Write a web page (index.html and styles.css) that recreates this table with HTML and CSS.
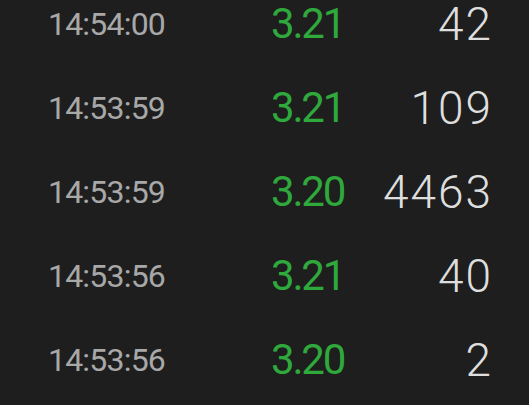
FILE: index.html
```html
<!DOCTYPE html>
<html lang="en">
<head>
  <meta charset="UTF-8">
  <meta name="viewport" content="width=device-width, initial-scale=1.0">
  <title>Trades</title>
  <link rel="stylesheet" href="styles.css">
</head>
<body>
  <div class="trade-list">
    <div class="trade-row">
      <span class="trade-time">14:54:00</span>
      <span class="trade-price">3.21</span>
      <span class="trade-volume">42</span>
    </div>
    <div class="trade-row">
      <span class="trade-time">14:53:59</span>
      <span class="trade-price">3.21</span>
      <span class="trade-volume">109</span>
    </div>
    <div class="trade-row">
      <span class="trade-time">14:53:59</span>
      <span class="trade-price">3.20</span>
      <span class="trade-volume">4463</span>
    </div>
    <div class="trade-row">
      <span class="trade-time">14:53:56</span>
      <span class="trade-price">3.21</span>
      <span class="trade-volume">40</span>
    </div>
    <div class="trade-row">
      <span class="trade-time">14:53:56</span>
      <span class="trade-price">3.20</span>
      <span class="trade-volume">2</span>
    </div>
  </div>
</body>
</html>
```

FILE: styles.css
```css
/**
 * Initializers.
 */
* {
  box-sizing: border-box;
  font-family: Roboto, 'Noto Sans', sans-serif;
}
html,
body {
  height: 100%;
}
body {
  padding: 0;
  margin: 0;
  overflow: hidden;
  background-color: #1e1e1e;
}

/**
 * Trade list.
 */
.trade-list {
  margin-top: -18px;
}
.trade-row {
  display: grid;
  grid-template-columns: 223px auto 1fr;
  align-items: center;
  height: 84px;
  padding: 0 38px 0 48px;
  line-height: 1;
}
.trade-time {
  color: #a8a8a8;
  font-size: 32px;
  letter-spacing: -0.8px;
}
.trade-price {
  color: #2fa83c;
  font-size: 42px;
  letter-spacing: -2.2px;
}
.trade-volume {
  justify-self: end;
  margin-right: -2px;
  color: #dedede;
  font-size: 46px;
  font-weight: 300;
  letter-spacing: 2px;
}
```
